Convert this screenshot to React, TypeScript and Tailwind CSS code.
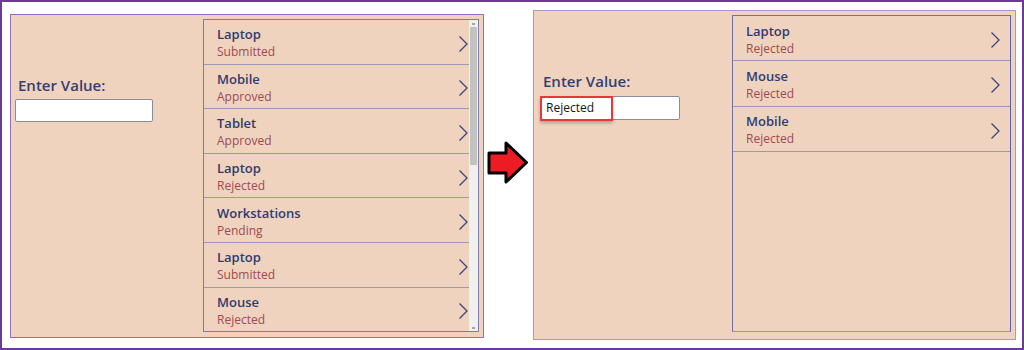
import React from 'react';

type Item = { title: string; status: string };

const leftItems: Item[] = [
    { title: 'Laptop', status: 'Submitted' },
    { title: 'Mobile', status: 'Approved' },
    { title: 'Tablet', status: 'Approved' },
    { title: 'Laptop', status: 'Rejected' },
    { title: 'Workstations', status: 'Pending' },
    { title: 'Laptop', status: 'Submitted' },
    { title: 'Mouse', status: 'Rejected' },
];

const rightItems: Item[] = [
    { title: 'Laptop', status: 'Rejected' },
    { title: 'Mouse', status: 'Rejected' },
    { title: 'Mobile', status: 'Rejected' },
];

const Chevron = () => (
    <svg width="11" height="18" viewBox="0 0 11 18" className="shrink-0 mt-[4px]">
        <path d="M1.5 1.5 L9 9 L1.5 16.5" fill="none" stroke="#3b4578" strokeWidth="1.3" />
    </svg>
);

const Row = ({ item, height }: { item: Item; height: string }) => (
    <div className={`flex items-center pl-[13px] pr-[9px] border-b border-[#9d98b2] ${height}`}>
        <div className="flex-1 mt-[3px]">
            <div className="text-[13px] leading-[18px] font-semibold text-[#2f3b6e]">{item.title}</div>
            <div className="text-[12px] leading-[18px] text-[#9c4a52]">{item.status}</div>
        </div>
        <Chevron />
    </div>
);

const Label = () => (
    <div className="text-[15px] leading-[20px] font-semibold text-[#333f6f]">Enter Value:</div>
);

const Arrow = () => (
    <svg width="42" height="46" viewBox="0 0 42 46" className="shrink-0">
        <polygon
            points="2,13 19,13 19,3 39.5,22.5 19,42 19,33 2,33"
            fill="#ed1c24"
            stroke="#000"
            strokeWidth="3"
            strokeLinejoin="round"
        />
    </svg>
);

export default function App() {
    return (
        <div
            className="w-[1024px] h-[350px] border-2 border-[#6b3a99] bg-white flex items-start"
            style={{ fontFamily: '"Open Sans", "Noto Sans", sans-serif' }}
        >
            {/* before */}
            <div className="ml-[8px] mt-[12px] w-[474px] h-[324px] border border-[#9b6bbd] bg-[#f0d3bf] flex shrink-0">
                <div className="w-[192px] pt-[60px] shrink-0">
                    <div className="pl-[7px]">
                        <Label />
                    </div>
                    <div className="ml-[4px] mt-[4px] w-[138px] h-[23px] bg-white border border-[#8c8a9c] rounded-[2px]" />
                </div>
                <div className="relative mt-[4px] w-[276px] h-[313px] border border-[#7f7ca6] overflow-hidden">
                    {leftItems.map((it, i) => (
                        <Row key={i} item={it} height="h-[44.6px]" />
                    ))}
                    <div className="absolute right-0 top-0 bottom-0 w-[9px] bg-[#f0f0f0]">
                        <div className="h-[7px] flex items-center justify-center">
                            <div className="w-[3px] h-[2px] bg-[#a3a3a3]" />
                        </div>
                        <div className="mx-[1px] h-[138px] bg-[#c2c2c2]" />
                        <div className="absolute bottom-0 left-0 right-0 h-[7px] flex items-center justify-center">
                            <div className="w-[3px] h-[2px] bg-[#a3a3a3]" />
                        </div>
                    </div>
                </div>
            </div>

            <div className="ml-[3px] mt-[138px]">
                <Arrow />
            </div>

            {/* after */}
            <div className="ml-[4px] mt-[8px] w-[483px] h-[330px] border border-[#b591cc] bg-[#f0d3bf] flex shrink-0">
                <div className="w-[198px] pt-[60px] shrink-0">
                    <div className="pl-[9px]">
                        <Label />
                    </div>
                    <div className="relative ml-[6px] mt-[5px] w-[140px] h-[24px] bg-white border border-[#8c8a9c] rounded-[2px]">
                        <div className="pl-[5px] text-[12px] leading-[22px] font-medium text-[#151515]">Rejected</div>
                        <div className="absolute -left-[1px] -top-[1px] w-[73px] h-[25px] border-2 border-[#e5383b] shadow-[0_2px_3px_rgba(0,0,0,0.25)]" />
                    </div>
                </div>
                <div className="mt-[4px] w-[279px] h-[317px] border border-[#6f70a8] border-r-[#5a5ea8] border-b-[#9a97ac]">
                    {rightItems.map((it, i) => (
                        <Row key={i} item={it} height="h-[45.3px]" />
                    ))}
                </div>
            </div>
        </div>
    );
}
